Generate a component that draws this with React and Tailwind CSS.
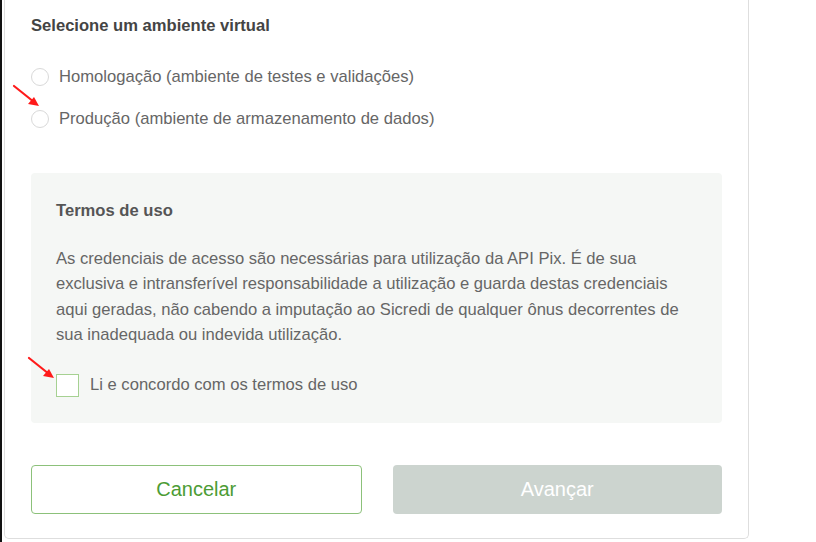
import React from "react";

function Radio({ label }) {
  return (
    <div className="flex items-center h-[22px]">
      <span className="w-[18px] h-[18px] rounded-full border border-[#d9d9d9] bg-white shrink-0" />
      <span className="ml-[10px] text-[16.6px] text-[#666666]">{label}</span>
    </div>
  );
}

function Arrow({ className }) {
  return (
    <svg className={className} width="30" height="26" viewBox="0 0 30 26">
      <line x1="2" y1="2" x2="22" y2="18" stroke="#ff1a1a" strokeWidth="2.2" strokeLinecap="round" />
      <polygon points="27,22 16,20 22,13" fill="#ff1a1a" />
    </svg>
  );
}

export default function App() {
  return (
    <div
      className="relative w-[816px] h-[542px] bg-white overflow-hidden border-l-2 border-[#111]"
      style={{ fontFamily: '"Liberation Sans", Arial, sans-serif' }}
    >
      <div className="ml-[2px] w-[745px] h-[539px] border-x border-b border-[#dedede] rounded-b-[5px] px-[26px] pt-[16px]">
        <h2 className="text-[16.6px] font-bold text-[#444444] leading-[20px]">Selecione um ambiente virtual</h2>
        <div className="mt-[30px] flex flex-col gap-[20px]">
          <Radio label="Homologação (ambiente de testes e validações)" />
          <Radio label="Produção (ambiente de armazenamento de dados)" />
        </div>
        <div className="mt-[43px] bg-[#f5f7f5] rounded-[4px] px-[25px] pt-[28px] pb-[25px]">
          <h3 className="text-[16.6px] font-bold text-[#555555] leading-[20px]">Termos de uso</h3>
          <p className="mt-[25px] text-[16.6px] text-[#666666] leading-[25.4px] w-[640px]">
            As credenciais de acesso são necessárias para utilização da API Pix. É de sua exclusiva e intransferível
            responsabilidade a utilização e guarda destas credenciais aqui geradas, não cabendo a imputação ao Sicredi de
            qualquer ônus decorrentes de sua inadequada ou indevida utilização.
          </p>
          <div className="mt-[25px] flex items-center">
            <span className="w-[23px] h-[23px] border border-[#a6d192] bg-white shrink-0" />
            <span className="ml-[11px] text-[16.6px] text-[#666666]">Li e concordo com os termos de uso</span>
          </div>
        </div>
        <div className="mt-[42px] flex gap-[31px]">
          <button className="w-[331px] h-[49px] border border-[#8cc17a] rounded-[4px] bg-white text-[20px] text-[#4c9c35]">
            Cancelar
          </button>
          <button className="w-[330px] h-[49px] rounded-[4px] bg-[#ccd4cf] text-[20px] text-white">
            Avançar
          </button>
        </div>
      </div>
      <Arrow className="absolute left-[10px] top-[84px]" />
      <Arrow className="absolute left-[25px] top-[356px]" />
    </div>
  );
}
